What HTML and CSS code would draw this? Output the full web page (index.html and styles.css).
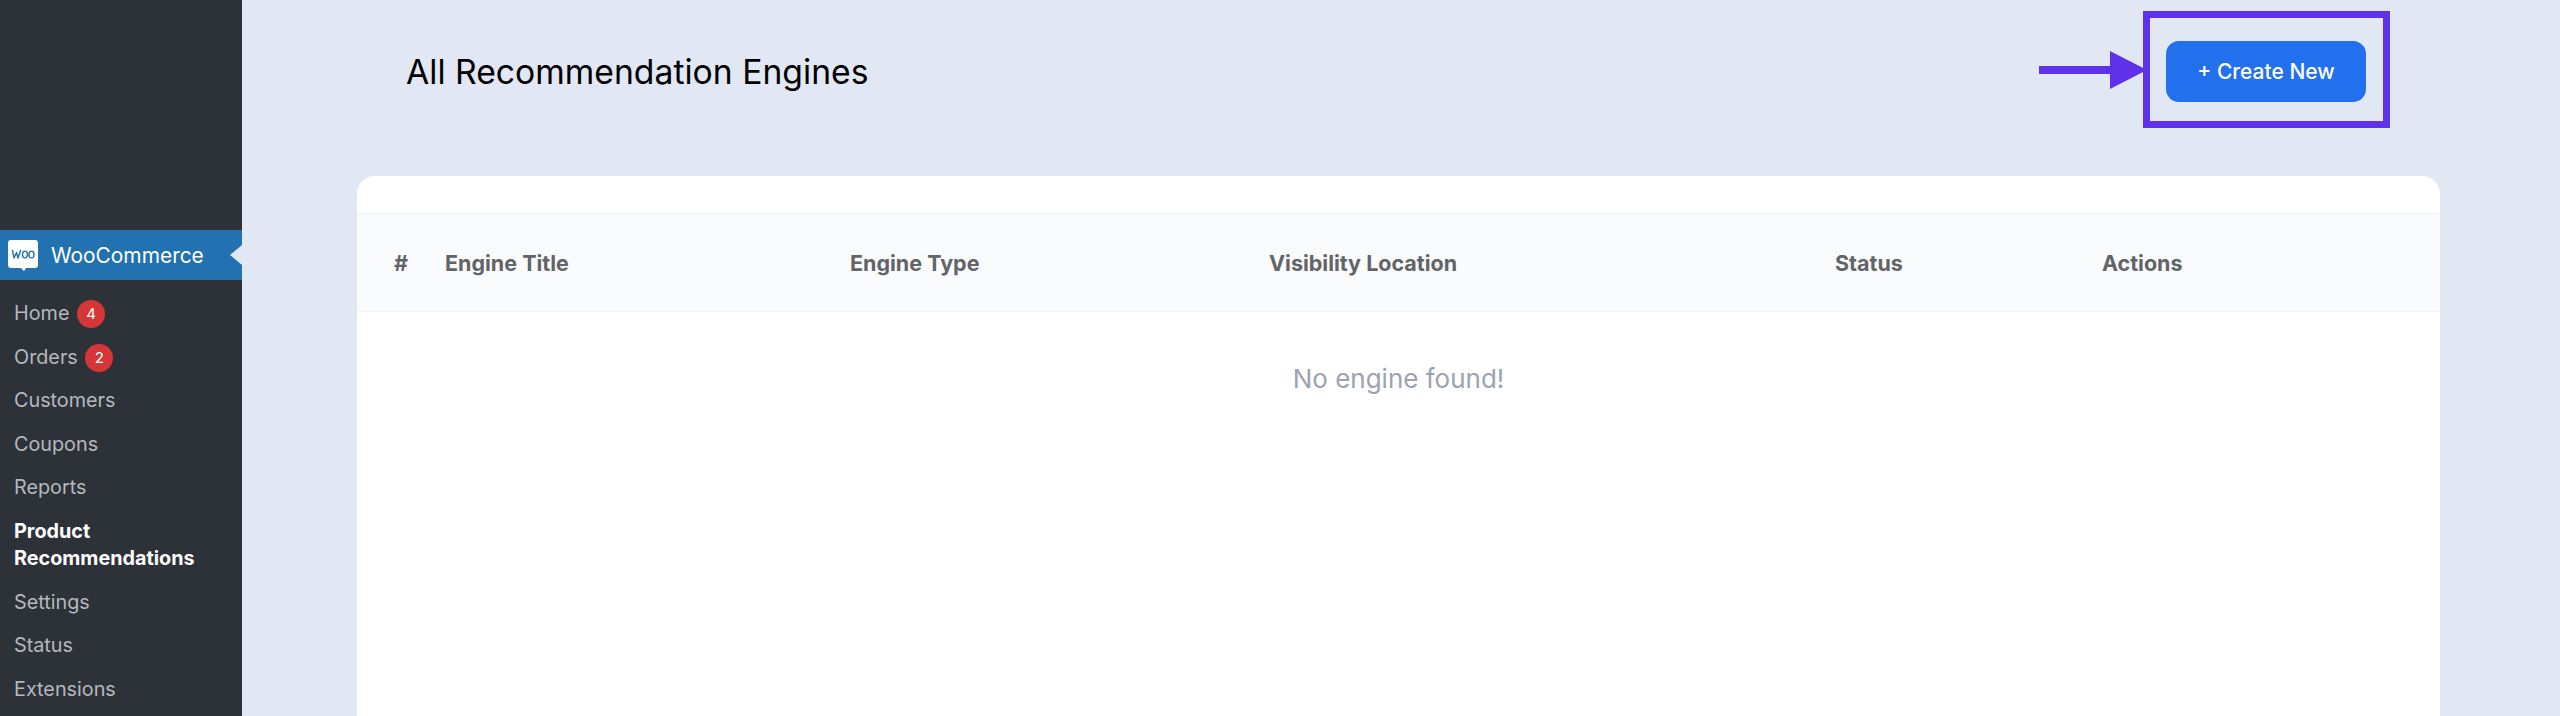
FILE: index.html
```html
<!DOCTYPE html>
<html lang="en">
<head>
<meta charset="utf-8">
<title>All Recommendation Engines</title>
<link rel="stylesheet" href="styles.css">
</head>
<body>
<div class="app">
  <aside class="sidebar">
    <div class="woo-item">
      <svg class="woo-logo" viewBox="0 0 30 32" aria-hidden="true">
        <path fill="#fff" d="M3 0h24a3 3 0 0 1 3 3v22a3 3 0 0 1-3 3H18l-2 3-3-3H3a3 3 0 0 1-3-3V3a3 3 0 0 1 3-3z"/>
        <path fill="none" stroke="#2271b1" stroke-width="1.4" stroke-linecap="round" stroke-linejoin="round" d="M4.500 10.500l1.500 7.500 2.500-5.500 1.500 5.500 2.600-7.500"/>
        <ellipse cx="17" cy="14.500" rx="2.500" ry="3.400" fill="none" stroke="#2271b1" stroke-width="1.400"/>
        <ellipse cx="23.500" cy="14.500" rx="2.500" ry="3.400" fill="none" stroke="#2271b1" stroke-width="1.400"/>
      </svg>
      <span class="woo-name">WooCommerce</span>
      <span class="woo-notch"></span>
    </div>
    <nav class="menu">
      <a class="menu-link">Home <span class="badge">4</span></a>
      <a class="menu-link">Orders <span class="badge">2</span></a>
      <a class="menu-link">Customers</a>
      <a class="menu-link">Coupons</a>
      <a class="menu-link">Reports</a>
      <a class="menu-link is-current">Product Recommendations</a>
      <a class="menu-link">Settings</a>
      <a class="menu-link">Status</a>
      <a class="menu-link">Extensions</a>
    </nav>
  </aside>
  <main class="content">
    <header class="page-head">
      <h1 class="page-title">All Recommendation Engines</h1>
      <div class="action">
        <button class="create-btn" type="button">+ Create New</button>
        <span class="highlight-box"></span>
        <svg class="highlight-arrow" viewBox="0 0 108 38" aria-hidden="true">
          <path fill="#5f31ea" d="M0 15h71V0l37 19-37 19V23H0z"/>
        </svg>
      </div>
    </header>
    <section class="card">
      <div class="table-head">
        <span>#</span>
        <span>Engine Title</span>
        <span>Engine Type</span>
        <span>Visibility Location</span>
        <span>Status</span>
        <span>Actions</span>
      </div>
      <p class="empty">No engine found!</p>
    </section>
  </main>
</div>
</body>
</html>
```
FILE: styles.css
```css
* { box-sizing: border-box; }
html, body { margin: 0; height: 100%; overflow: hidden; }
body {
  background: #e1e7f3;
  font-family: Inter, "Liberation Sans", sans-serif;
}
.app { display: flex; height: 716px; overflow: hidden; }

.sidebar {
  flex: 0 0 242px;
  background: #2d3239;
  padding-top: 230px;
}
.woo-item {
  position: relative;
  height: 50px;
  display: flex;
  align-items: center;
  gap: 13px;
  padding-left: 8px;
  background: #2271b1;
  color: #fff;
  font-size: 20.900px;
}
.woo-logo { width: 30px; height: 32px; flex: none; margin-top: 2px; }
.woo-notch {
  position: absolute;
  right: 0;
  top: 15px;
  border: 10px solid transparent;
  border-left-width: 0;
  border-right-color: #e1e7f3;
  border-right-width: 12px;
}
.menu { display: flex; flex-direction: column; padding-top: 12px; }
.menu-link {
  display: block;
  padding: 8px 14px;
  font-size: 19.800px;
  line-height: 27.500px;
  color: #b4b8be;
}
.menu-link.is-current { color: #fff; font-weight: 700; }
.badge {
  display: inline-block;
  width: 28px;
  height: 28px;
  margin: 0 0 -1px 2px;
  border-radius: 50%;
  background: #d63638;
  color: #fff;
  font-size: 15px;
  line-height: 28px;
  text-align: center;
  vertical-align: top;
}

.content { flex: 1; min-width: 0; padding: 0 120px 0 115px; }
.page-head {
  height: 176px;
  display: flex;
  align-items: flex-start;
  justify-content: space-between;
  padding: 41px 74px 0 49px;
}
.page-title {
  margin: 0;
  font-size: 33.700px;
  font-weight: 400;
  line-height: 61px;
  color: #000;
}
.action { position: relative; }
.create-btn {
  display: block;
  width: 200px;
  height: 61px;
  border: 0;
  border-radius: 13px;
  background: #2270ee;
  color: #fff;
  font: 500 21px Inter, "Liberation Sans", sans-serif;
}
.highlight-box {
  position: absolute;
  left: -23px;
  top: -30px;
  width: 247px;
  height: 117px;
  border: 7px solid #5f31ea;
}
.highlight-arrow {
  position: absolute;
  left: -127px;
  top: 10px;
  width: 108px;
  height: 38px;
}

.card {
  background: #fff;
  border-radius: 18px 18px 0 0;
  padding-top: 37px;
  height: 560px;
}
.table-head {
  display: grid;
  grid-template-columns: 51px 405px 419px 566px 267px 1fr;
  align-items: center;
  height: 99px;
  padding-left: 37px;
  background: #fafbfd;
  border-top: 1px solid #f0f2f5;
  border-bottom: 1px solid #f0f2f5;
  color: #626468;
  font-size: 21.500px;
  font-weight: 700;
}
.empty {
  margin: 49px 0 0;
  text-align: center;
  color: #9ca3af;
  font-size: 26px;
  line-height: 36px;
}
```
